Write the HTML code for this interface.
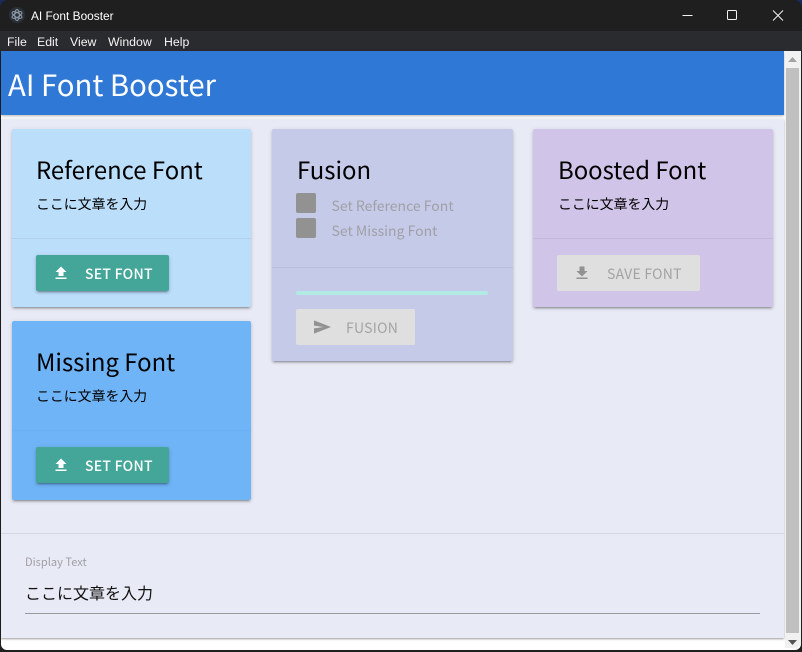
<!DOCTYPE html>
<html><head><meta charset="utf-8"><style>
*{box-sizing:border-box;margin:0;padding:0}
html,body{width:802px;height:652px;overflow:hidden;background:#1a2a5a}
body{position:relative;font-family:"Noto Sans CJK JP","Liberation Sans",sans-serif;color:#000}
.a{position:absolute;white-space:nowrap}
.card{position:absolute;border-radius:2px;box-shadow:0 2px 2px rgba(0,0,0,.14),0 3px 1px -2px rgba(0,0,0,.2),0 1px 5px rgba(0,0,0,.12)}
.h{font-size:23.9px;line-height:34px;letter-spacing:0}
.s{font-size:13.9px;line-height:20px}
.d{position:absolute;left:0;right:0;height:1px;background:rgba(0,0,0,.06)}
.btn{position:absolute;height:36px;border-radius:2px;font-size:14px;font-weight:500;letter-spacing:.25px;line-height:38px;white-space:nowrap}
.on{background:#43a698;color:#fff;box-shadow:0 2px 2px rgba(0,0,0,.14),0 3px 1px -2px rgba(0,0,0,.2),0 1px 5px rgba(0,0,0,.12)}
.off{background:#dfdfdf;color:#a3a3a3;font-weight:400}
.btn svg{position:absolute}
.btn span{position:absolute;top:0}
.cb{position:absolute;left:24px;width:20px;height:20px;border-radius:2px;background:#929292}
.cl{position:absolute;left:59.5px;font-size:14px;line-height:20px;color:#a0a0a6;white-space:nowrap}
.menu{position:absolute;top:34px;font:12.3px/16px "Liberation Sans",sans-serif;color:#f4f4f4}
</style></head><body>
<div class="a" style="left:0;top:0;width:802px;height:652px;background:#1f1f1f;border-radius:8px 8px 0 0"></div>
<div class="a" style="left:0;top:31px;width:802px;height:20px;background:#2a2b2f"></div>
<svg class="a" style="left:9px;top:7px" width="16" height="16" viewBox="0 0 16 16"><circle cx="8" cy="8" r="8" fill="#2b3038"/><g fill="none" stroke="#8d9aa8" stroke-width="1"><ellipse cx="8" cy="8" rx="5.5" ry="2.3" transform="rotate(30 8 8)"/><ellipse cx="8" cy="8" rx="5.5" ry="2.3" transform="rotate(90 8 8)"/><ellipse cx="8" cy="8" rx="5.5" ry="2.3" transform="rotate(150 8 8)"/></g></svg>
<div class="a" style="left:31px;top:8px;font:11.9px/16px 'Liberation Sans',sans-serif;color:#fff">AI Font Booster</div>
<svg class="a" style="left:680px;top:8px" width="112" height="16" viewBox="0 0 112 16" fill="none" stroke="#f2f2f2" stroke-width="1"><path d="M2.500 7.500H12.500"/><rect x="47.500" y="2.500" width="9" height="9" rx="1"/><path d="M93 2.500L103 12.500M103 2.500L93 12.500"/></svg>
<div class="menu" style="left:7px">File</div><div class="menu" style="left:37px">Edit</div><div class="menu" style="left:70px">View</div><div class="menu" style="left:108px">Window</div><div class="menu" style="left:164px">Help</div>

<div class="a" style="left:1px;top:51px;width:800px;height:599px;background:#fff;border-radius:0 0 6px 6px"></div>
<div class="a" style="left:1px;top:119px;width:783px;height:519px;background:#e8eaf6;box-shadow:0 1px 2px rgba(0,0,0,.4)"></div>
<div class="a" style="left:1px;top:51px;width:783px;height:64px;background:#2f78d6;box-shadow:0 1px 3px rgba(0,0,0,.3);color:#fff;font-size:29.3px;line-height:66px;padding-left:7px">AI Font Booster</div>

<div class="a" style="left:785px;top:51px;width:16px;height:597px;background:#f1f1f1;border-radius:0 0 6px 0"></div>
<div class="a" style="left:786px;top:68px;width:13px;height:565px;background:#c0c0c0"></div>
<svg class="a" style="left:788px;top:57px" width="9" height="6"><path d="M0 5L4.500 0L9 5Z" fill="#a3a3a3"/></svg>
<svg class="a" style="left:788px;top:640px" width="9" height="6"><path d="M0 0L4.500 5L9 0Z" fill="#555"/></svg>

<div class="card" style="left:12px;top:129px;width:239px;height:178px;background:#bbdefb">
 <div class="a h" style="left:24px;top:23px">Reference Font</div>
 <div class="a s" style="left:24px;top:65px">ここに文章を入力</div>
 <div class="d" style="top:109px"></div>
 <div class="btn on" style="left:24px;top:126px;width:133px"><svg style="left:17px;top:9.500px" width="16" height="16" viewBox="0 0 16 16"><path d="M2.500 12.500h11v1.500h-11zM5.500 11V7H2.500L8 1.500 13.500 7H10.500v4z" fill="#fff"/></svg><span style="left:49px">SET FONT</span></div>
</div>
<div class="card" style="left:12px;top:321px;width:239px;height:179px;background:#6fb4f6">
 <div class="a h" style="left:24px;top:23px">Missing Font</div>
 <div class="a s" style="left:24px;top:65px">ここに文章を入力</div>
 <div class="d" style="top:109px;background:rgba(0,0,0,.02)"></div>
 <div class="btn on" style="left:24px;top:126px;width:133px"><svg style="left:17px;top:9.500px" width="16" height="16" viewBox="0 0 16 16"><path d="M2.500 12.500h11v1.500h-11zM5.500 11V7H2.500L8 1.500 13.500 7H10.500v4z" fill="#fff"/></svg><span style="left:49px">SET FONT</span></div>
</div>
<div class="card" style="left:272px;top:129px;width:241px;height:232px;background:#c5cae9">
 <div class="a h" style="left:25px;top:23px">Fusion</div>
 <div class="cb" style="top:64px"></div><div class="cl" style="top:67px">Set Reference Font</div>
 <div class="cb" style="top:89px"></div><div class="cl" style="top:92px">Set Missing Font</div>
 <div class="d" style="top:138px"></div>
 <div class="a" style="left:24px;top:162px;width:192px;height:4px;border-radius:2px;background:#b2ebe4"></div>
 <div class="btn off" style="left:24px;top:180px;width:119px"><svg style="left:18px;top:9px" width="17" height="18" viewBox="0 0 18 18"><path d="M0 2L18 9L0 16V10.500L10 9L0 7.500Z" fill="#929292"/></svg><span style="left:50px">FUSION</span></div>
</div>
<div class="card" style="left:533px;top:129px;width:240px;height:178px;background:#d1c4e9">
 <div class="a h" style="left:25px;top:23px">Boosted Font</div>
 <div class="a s" style="left:25px;top:65px">ここに文章を入力</div>
 <div class="d" style="top:109px"></div>
 <div class="btn off" style="left:24px;top:126px;width:143px"><svg style="left:17px;top:9.500px" width="16" height="16" viewBox="0 0 16 16"><path d="M2.500 12.500h11v1.500h-11zM5.500 1.500h5V6h3L8 11.500 2.500 6h3z" fill="#929292"/></svg><span style="left:50px">SAVE FONT</span></div>
</div>

<div class="a" style="left:1px;top:533px;width:783px;height:1px;background:#d5d7e2"></div>
<div class="a" style="left:25px;top:554px;font-size:11.1px;line-height:16px;color:#a0a0a4">Display Text</div>
<div class="a" style="left:25px;top:581px;font-size:16px;line-height:22px;color:#111">ここに文章を入力</div>
<div class="a" style="left:25px;top:613px;width:735px;height:1px;background:#9a9a9e"></div>
</body></html>
